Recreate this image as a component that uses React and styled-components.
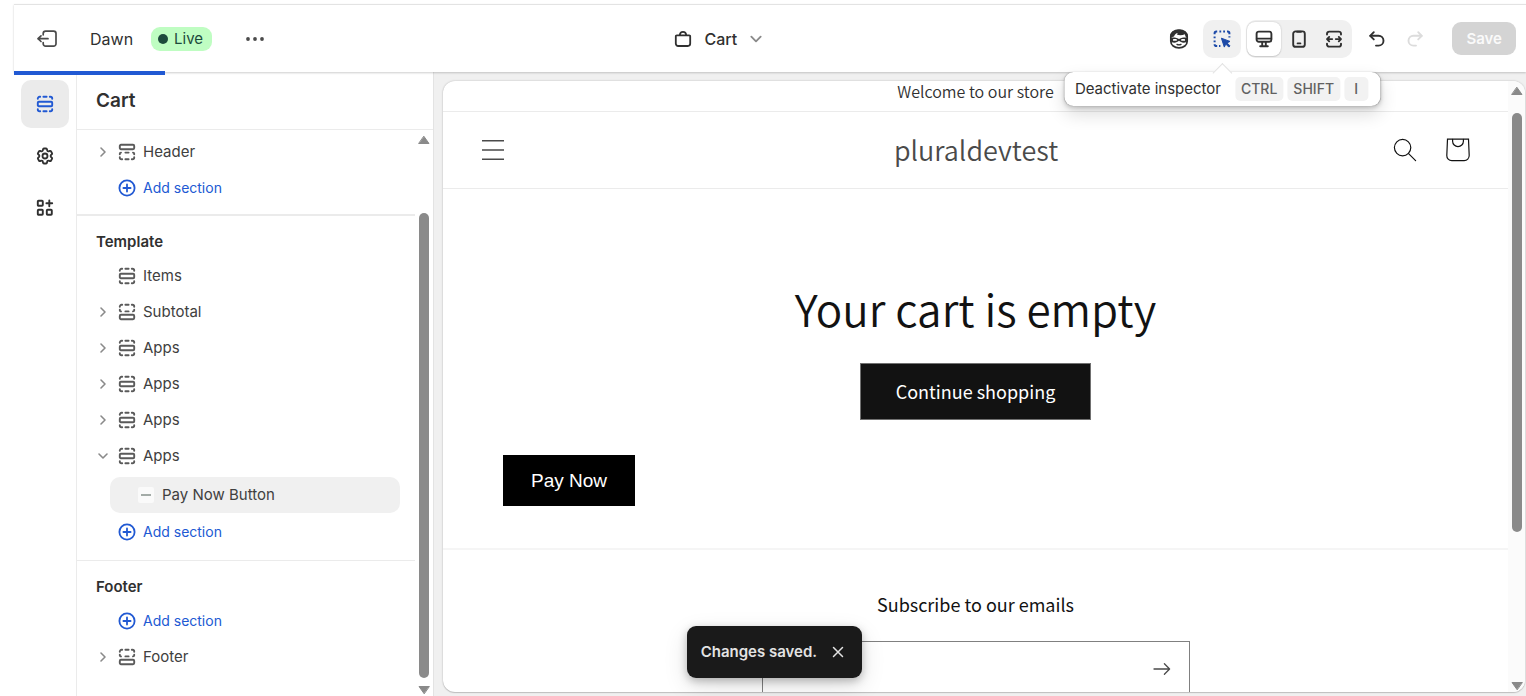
import React, { useState } from 'react'
import styled, { createGlobalStyle } from 'styled-components'
import { HiOutlineCog6Tooth } from 'react-icons/hi2'

const GlobalStyle = createGlobalStyle`
    * { box-sizing: border-box; }
    body {
        margin: 0;
        background: #fff;
        color: #303030;
        font-family: Inter, "Liberation Sans", sans-serif;
        font-size: 15px;
        line-height: 20px;
    }
    button, input { font: inherit; color: inherit; }
    button {
        border: 0;
        padding: 0;
        background: none;
        cursor: pointer;
    }
    h1, h2, h3, p, ul { margin: 0; padding: 0; }
    svg { display: block; flex: none; }
`

/* ---------- icons ---------- */

function Icon({ size = 18, box = 18, width = 1.6, children, ...rest }) {
    return (
        <svg
            width={size}
            height={size}
            viewBox={`0 0 ${box} ${box}`}
            fill='none'
            stroke='currentColor'
            strokeWidth={width}
            strokeLinecap='round'
            strokeLinejoin='round'
            aria-hidden='true'
            {...rest}
        >
            {children}
        </svg>
    )
}

const ExitIcon = () => (
    <Icon size={22} box={22} width={1.7}>
        <path d='M7.2 6.8V5.6a2.4 2.4 0 0 1 2.4-2.4h8a2.4 2.4 0 0 1 2.4 2.4v10.2a2.4 2.4 0 0 1-2.4 2.4h-8a2.4 2.4 0 0 1-2.4-2.4v-1.2' />
        <path d='M12 10.7H2M5 7.9l-3 2.8 3 2.8' />
    </Icon>
)

const DotsIcon = () => (
    <Icon size={20} box={20} fill='currentColor' stroke='none'>
        <circle cx='3' cy='10' r='1.9' />
        <circle cx='10' cy='10' r='1.9' />
        <circle cx='17' cy='10' r='1.9' />
    </Icon>
)

const BagIcon = () => (
    <Icon width={1.8}>
        <path d='M1.8 6.4a1 1 0 0 1 1-1h12.4a1 1 0 0 1 1 1v7.2a2.4 2.4 0 0 1-2.4 2.4H4.2a2.4 2.4 0 0 1-2.4-2.4z' />
        <path d='M5.8 5.2C6 3 7.2 1.9 9 1.9s3 1.1 3.2 3.3' />
    </Icon>
)

const Chevron = ({ down, size = 12 }) => (
    <Icon size={size} box={12} width={1.6}>
        {down ? <path d='M2 4l4 4 4-4' /> : <path d='M4 2l4 4-4 4' />}
    </Icon>
)

const SectionIcon = ({ kind = 'body' }) => (
    <Icon width={1.9}>
        {kind === 'body' && (
            <>
                <rect x='1.8' y='6.8' width='14.4' height='4.4' rx='1' />
                <path d='M1.8 3.8v-.2a1.8 1.8 0 0 1 1.8-1.8h.6M7.4 1.8h3.2M13.8 1.8h.6a1.8 1.8 0 0 1 1.8 1.8v.2' />
                <path d='M1.8 14.2v.2a1.8 1.8 0 0 0 1.8 1.8h.6M7.4 16.2h3.2M13.8 16.2h.6a1.8 1.8 0 0 0 1.8-1.8v-.2' />
            </>
        )}
        {kind === 'top' && (
            <>
                <rect x='1.8' y='1.8' width='14.4' height='4.4' rx='1.2' />
                <path d='M1.8 11.2v-.4a1.2 1.2 0 0 1 1.2-1.2M7.4 9.6h3.2M15 9.6a1.2 1.2 0 0 1 1.2 1.2v.4' />
                <path d='M1.8 14.2v.2a1.8 1.8 0 0 0 1.8 1.8h.6M7.4 16.2h3.2M13.8 16.2h.6a1.8 1.8 0 0 0 1.8-1.8v-.2' />
            </>
        )}
        {kind === 'bottom' && (
            <>
                <rect x='1.8' y='11.8' width='14.4' height='4.4' rx='1.2' />
                <path d='M1.8 3.8v-.2a1.8 1.8 0 0 1 1.8-1.8h.6M7.4 1.8h3.2M13.8 1.8h.6a1.8 1.8 0 0 1 1.8 1.8v.2' />
                <path d='M1.8 6.8v.4A1.2 1.2 0 0 0 3 8.4M7.4 8.4h3.2M15 8.4a1.2 1.2 0 0 0 1.2-1.2v-.4' />
            </>
        )}
    </Icon>
)

const PlusCircleIcon = () => (
    <Icon width={1.8}>
        <circle cx='9' cy='9' r='7.6' />
        <path d='M9 5.4v7.2M5.4 9h7.2' />
    </Icon>
)

const AppsAddIcon = () => (
    <Icon width={1.9}>
        <rect x='1.8' y='1.8' width='5' height='5' rx='.8' />
        <rect x='1.8' y='10.8' width='5' height='5' rx='.8' />
        <rect x='10.8' y='10.8' width='5' height='5' rx='.8' />
        <path d='M13.3 1.4v5.8M10.4 4.3h5.8' />
    </Icon>
)

const HeroIcon = () => (
    <Icon size={20} box={20} width={1.7}>
        <path d='M1.8 7.4C1.8 3.6 5 1.2 10 1.2s8.2 2.4 8.2 6.2v4.8c0 4-3.6 6.6-8.2 6.6s-8.2-2.6-8.2-6.6z' />
        <path
            d='M1.6 8.6V6.4C1.8 3 5 .8 10 .8c4.8 0 8.2 2.2 8.4 5.6v2.2l-1.8-.8-.8-2.6c-2.4 1.2-5.6 1.4-8 .2L8.8 4c-1.6.2-3 1.2-3.8 3.6z'
            fill='currentColor'
            stroke='none'
        />
        <path
            d='M1.8 8.8c2.4-.4 5-.2 8.2 1.2 3.2-1.4 5.8-1.6 8.2-1.2v3.6c-3 2-6 1.4-8.2-.6-2.2 2-5.2 2.6-8.2.6z'
            fill='currentColor'
            stroke='none'
        />
        <path d='M4.8 10.9H7M13 10.9h2.2' stroke='#fff' strokeWidth='1.8' />
        <path d='M8 15.4c1.2.6 2.8.6 4 0' strokeWidth='1.4' />
    </Icon>
)

const InspectIcon = () => (
    <Icon width={2} strokeLinecap='butt'>
        <path d='M1.6 4.2v-.8a1.8 1.8 0 0 1 1.8-1.8h.8M6.4 1.6h1.8M10.2 1.6H12M14 1.6h.6a1.8 1.8 0 0 1 1.8 1.8v.8' />
        <path d='M1.6 6.4v1.8M1.6 10.4v1.8M1.6 14.2A1.8 1.8 0 0 0 3.4 16h.8M6 16h1.4M16.4 6.2v1.4' />
        <path
            d='M8.4 8.2l8.6 3.2-3 1.5 3 3-1.2 1.2-3-3-1.5 3z'
            fill='currentColor'
            strokeWidth='1'
            strokeLinejoin='round'
        />
    </Icon>
)

const DesktopIcon = () => (
    <Icon width={1.9}>
        <rect x='1.6' y='1.6' width='14.8' height='10.2' rx='2.2' />
        <path d='M1.8 8.6h14.4M7.2 12v3.4M10.8 12v3.4M5.2 16.2h7.6' />
    </Icon>
)

const PhoneIcon = () => (
    <Icon width={1.9}>
        <rect x='3.2' y='1.4' width='11.6' height='15.4' rx='2.4' />
        <path d='M7.6 13.4h2.8M7 1.8h4' />
    </Icon>
)

const FullWidthIcon = () => (
    <Icon width={1.9}>
        <path d='M2 4.6v-.8a2.2 2.2 0 0 1 2.2-2.2h9.6A2.2 2.2 0 0 1 16 3.8v.8' />
        <path d='M2 13.6v.8a2.2 2.2 0 0 0 2.2 2.2h9.6a2.2 2.2 0 0 0 2.2-2.2v-.8' />
        <path d='M2 9.1h5.2M10.8 9.1H16M4.2 6.9 2 9.1l2.2 2.2M13.8 6.9 16 9.1l-2.2 2.2' />
    </Icon>
)

const UndoIcon = ({ flip }) => (
    <Icon width={1.9} transform={flip ? 'scale(-1 1)' : undefined}>
        <path d='M5.8 2.2 2.2 5.8l3.6 3.6' />
        <path d='M2.4 5.8h8.2a4.9 4.9 0 0 1 0 9.8H8' />
    </Icon>
)

const MenuIcon = () => (
    <Icon size={24} box={24} width={1.5} strokeLinecap='butt' stroke='#4a4a4a'>
        <path d='M1 2.7h22M1 12h22M1 21.3h22' />
    </Icon>
)

const SearchIcon = () => (
    <Icon size={24} box={24} width={1.2}>
        <circle cx='9.6' cy='9.6' r='8.2' />
        <path d='M15.6 15.6l7 7' />
    </Icon>
)

const CartIcon = () => (
    <Icon size={26} box={26} width={1.2} strokeLinejoin='miter'>
        <path d='M2.5 2.2h21l.7 16.2a5 5 0 0 1-5 5.2H6.8a5 5 0 0 1-5-5.2z' />
        <path d='M7.6 2.4v1.8a5.4 5.4 0 0 0 10.8 0V2.4' />
    </Icon>
)

const ArrowIcon = () => (
    <Icon width={1.3}>
        <path d='M1 9h15.4M11.4 3.8 16.6 9l-5.2 5.2' />
    </Icon>
)

const CloseIcon = () => (
    <Icon size={12} box={12} width={1.5}>
        <path d='M1.5 1.5l9 9M10.5 1.5l-9 9' />
    </Icon>
)

const Triangle = ({ up }) => (
    <Icon size={12} box={12} fill='currentColor' width={1}>
        {up ? <path d='M6 2.5 11 9.5H1z' /> : <path d='M6 9.5 1 2.5h10z' />}
    </Icon>
)

/* ---------- small parts ---------- */

function Scrollbar({ before, thumb, after }) {
    return (
        <Track aria-hidden='true'>
            <Triangle up />
            <Thumb $before={before} $size={thumb} $after={after} />
            <Triangle />
        </Track>
    )
}

function SectionRow({ name, kind, state }) {
    return (
        <Row>
            <Toggle aria-label={`Expand ${name}`} disabled={!state}>
                {state && <Chevron down={state === 'open'} />}
            </Toggle>
            <SectionIcon kind={kind} />
            <RowName href='#section'>{name}</RowName>
        </Row>
    )
}

function AddSection() {
    return (
        <Row>
            <AddButton>
                <PlusCircleIcon />
                Add section
            </AddButton>
        </Row>
    )
}

function TopBar() {
    return (
        <Header>
            <ThemeInfo>
                <IconButton aria-label='Exit'><ExitIcon /></IconButton>
                <ThemeName>Dawn</ThemeName>
                <Badge>Live</Badge>
                <IconButton aria-label='More actions'><DotsIcon /></IconButton>
            </ThemeInfo>

            <PagePicker>
                <BagIcon />
                Cart
                <Chevron down size={14} />
            </PagePicker>

            <Tools>
                <ToolButton aria-label='Sidekick'><HeroIcon /></ToolButton>
                <InspectorWrap>
                    <InspectorButton aria-label='Deactivate inspector'><InspectIcon /></InspectorButton>
                    <Tooltip role='tooltip'>
                        <span>Deactivate inspector</span>
                        <Keys>
                            <kbd>CTRL</kbd>
                            <kbd>SHIFT</kbd>
                            <kbd>I</kbd>
                        </Keys>
                    </Tooltip>
                </InspectorWrap>
                <Devices>
                    <DeviceButton $active aria-label='Desktop'><DesktopIcon /></DeviceButton>
                    <DeviceButton aria-label='Mobile'><PhoneIcon /></DeviceButton>
                    <DeviceButton aria-label='Fullscreen'><FullWidthIcon /></DeviceButton>
                </Devices>
                <History>
                    <ToolButton aria-label='Undo'><UndoIcon /></ToolButton>
                    <ToolButton aria-label='Redo' disabled><UndoIcon flip /></ToolButton>
                </History>
                <SaveButton disabled>Save</SaveButton>
            </Tools>
        </Header>
    )
}

function Sidebar() {
    return (
        <Panel>
            <PanelTitle>Cart</PanelTitle>
            <PanelBody>
                <Sections>
                    <Group $line={2}>
                        <SectionRow name='Header' kind='top' state='closed' />
                        <AddSection />
                    </Group>
                    <Group $line={1}>
                        <GroupTitle>Template</GroupTitle>
                        <SectionRow name='Items' />
                        <SectionRow name='Subtotal' kind='bottom' state='closed' />
                        <SectionRow name='Apps' state='closed' />
                        <SectionRow name='Apps' state='closed' />
                        <SectionRow name='Apps' state='closed' />
                        <SectionRow name='Apps' state='open' />
                        <BlockRow href='#block'>
                            <BlockThumb />
                            Pay Now Button
                        </BlockRow>
                        <AddSection />
                    </Group>
                    <Group>
                        <GroupTitle>Footer</GroupTitle>
                        <AddSection />
                        <SectionRow name='Footer' kind='bottom' state='closed' />
                    </Group>
                </Sections>
                <Scrollbar before={67} thumb={466} after={6} />
            </PanelBody>
        </Panel>
    )
}

function Store() {
    return (
        <Frame>
            <StorePage>
                <Announcement>Welcome to our store</Announcement>
                <StoreHeader>
                    <IconButton aria-label='Menu'><MenuIcon /></IconButton>
                    <StoreName href='#home'>pluraldevtest</StoreName>
                    <StoreLinks>
                        <IconButton aria-label='Search'><SearchIcon /></IconButton>
                        <IconButton aria-label='Cart'><CartIcon /></IconButton>
                    </StoreLinks>
                </StoreHeader>
                <CartSection>
                    <EmptyTitle>Your cart is empty</EmptyTitle>
                    <ShopButton href='#shop'>Continue shopping</ShopButton>
                    <PayButton>Pay Now</PayButton>
                </CartSection>
                <Newsletter>
                    <NewsletterTitle id='newsletter'>Subscribe to our emails</NewsletterTitle>
                    <EmailField>
                        <input type='email' aria-labelledby='newsletter' />
                        <IconButton aria-label='Subscribe'><ArrowIcon /></IconButton>
                    </EmailField>
                </Newsletter>
            </StorePage>
            <StoreScroll>
                <Scrollbar before={16} thumb={418} after={148} />
            </StoreScroll>
        </Frame>
    )
}

function App() {
    const [toast, setToast] = useState(true)

    return (
        <Page>
            <GlobalStyle />
            <TopBar />
            <Editor>
                <Rail>
                    <RailButton $active aria-label='Sections'><SectionIcon /></RailButton>
                    <RailButton aria-label='Theme settings'><HiOutlineCog6Tooth size={20} strokeWidth={2.2} /></RailButton>
                    <RailButton aria-label='App embeds'><AppsAddIcon /></RailButton>
                </Rail>
                <Sidebar />
                <Canvas>
                    <Store />
                </Canvas>
            </Editor>
            {toast && (
                <Toast role='status'>
                    Changes saved.
                    <IconButton aria-label='Dismiss' onClick={() => setToast(false)}><CloseIcon /></IconButton>
                </Toast>
            )}
        </Page>
    )
}

/* ---------- page and top bar ---------- */

const Page = styled.div`
    position: relative;
    display: flex;
    flex-direction: column;
    height: 100vh;
    padding: 4px 0 0 14px;
    overflow: hidden;
`

const Header = styled.header`
    position: relative;
    z-index: 2;
    display: flex;
    align-items: center;
    justify-content: space-between;
    flex: none;
    height: 68px;
    padding: 0 10px 0 22px;
    background: #fff;
    border-top: 1px solid #e3e3e3;
    box-shadow: 0 1px 2px rgba(0, 0, 0, 0.2);

    /* loading bar */
    &::after {
        content: '';
        position: absolute;
        left: 0;
        bottom: -3px;
        width: 10%;
        height: 4px;
        background: #2159d3;
    }
`

const IconButton = styled.button`
    display: flex;
    align-items: center;
    justify-content: center;
`

const ThemeInfo = styled.div`
    display: flex;
    align-items: center;
    color: #4a4a4a;
`

const ThemeName = styled.span`
    margin: 0 18px 0 32px;
    color: #303030;
    font-size: 16px;
`

const Badge = styled.span`
    display: flex;
    align-items: center;
    gap: 6px;
    height: 24px;
    margin-right: 33px;
    padding: 0 9px 0 7px;
    border-radius: 9px;
    background: #bffdc2;
    color: #1d4a3c;

    &::before {
        content: '';
        width: 10px;
        height: 10px;
        border-radius: 50%;
        background: currentColor;
    }
`

const PagePicker = styled.button`
    display: flex;
    align-items: center;
    gap: 12px;
    margin-left: 12px;
    font-size: 16px;
    font-weight: 500;

    svg:last-child { color: #8a8a8a; }
`

const Tools = styled.div`
    display: flex;
    align-items: center;
`

const ToolButton = styled.button`
    display: flex;
    align-items: center;
    justify-content: center;
    width: 38px;
    height: 38px;

    &:disabled { color: #dcdcdc; }
`

const InspectorWrap = styled.div`
    position: relative;
    margin: 0 5px;
`

const InspectorButton = styled(ToolButton)`
    border-radius: 10px;
    background: #f0f0f0;
    color: #1d4aa8;
`

const Tooltip = styled.div`
    position: absolute;
    top: 52px;
    left: 50%;
    display: flex;
    align-items: center;
    gap: 14px;
    height: 34px;
    padding: 0 12px 0 10px;
    border-radius: 9px;
    background: #fff;
    box-shadow: 0 0 1px rgba(0, 0, 0, 0.3), 0 2px 4px rgba(0, 0, 0, 0.18), 0 8px 18px rgba(0, 0, 0, 0.14);
    white-space: nowrap;
    transform: translateX(-50%);

    &::before {
        content: '';
        position: absolute;
        top: -6px;
        left: 50%;
        width: 13px;
        height: 13px;
        margin-left: -7px;
        border: 1px solid #e3e3e3;
        border-right: 0;
        border-bottom: 0;
        background: #fff;
        transform: rotate(45deg);
    }
`

const Keys = styled.span`
    display: flex;
    gap: 4px;

    kbd {
        min-width: 24px;
        padding: 2px 6px;
        border-radius: 5px;
        background: #f2f2f2;
        color: #616161;
        font-family: inherit;
        font-size: 14px;
        font-weight: 500;
        text-align: center;
    }
`

const Devices = styled.div`
    display: flex;
    align-items: center;
    gap: 1px;
    height: 38px;
    padding: 0 1px;
    border-radius: 10px;
    background: #f0f0f0;
`

const DeviceButton = styled.button`
    display: flex;
    align-items: center;
    justify-content: center;
    width: 34px;
    height: 34px;
    border-radius: 8px;
    background: ${p => (p.$active ? '#fff' : 'transparent')};
    box-shadow: ${p => (p.$active ? '0 0 2px rgba(0, 0, 0, 0.2), 0 1px 1px rgba(0, 0, 0, 0.1)' : 'none')};
`

const History = styled.div`
    display: flex;
    margin: 0 18px 0 6px;
`

const SaveButton = styled.button`
    height: 33px;
    padding: 0 14px;
    border-radius: 9px;
    background: #d4d4d4;
    font-weight: 600;

    &:disabled { color: #fafafa; }
`

/* ---------- left side ---------- */

const Editor = styled.div`
    display: flex;
    flex: 1;
    min-height: 0;
`

const Rail = styled.nav`
    display: flex;
    flex-direction: column;
    align-items: center;
    gap: 4px;
    flex: none;
    width: 63px;
    padding-top: 8px;
    border-right: 1px solid #ebebeb;
`

const RailButton = styled.button`
    display: flex;
    align-items: center;
    justify-content: center;
    width: 48px;
    height: 48px;
    border-radius: 10px;
    background: ${p => (p.$active ? '#ebebeb' : 'transparent')};
    color: ${p => (p.$active ? '#2159d3' : '#303030')};
`

const Panel = styled.aside`
    display: flex;
    flex-direction: column;
    flex: none;
    width: 357px;
    border-right: 1px solid #e3e3e3;
`

const PanelTitle = styled.h1`
    flex: none;
    padding: 18px 19px;
    border-bottom: 1px solid #ebebeb;
    font-size: 19px;
    font-weight: 600;
    line-height: 21px;
`

const PanelBody = styled.div`
    display: flex;
    flex: 1;
    min-height: 0;
    padding-right: 1px;
`

const Sections = styled.div`
    flex: 1;
    padding-top: 4px;
    overflow: hidden;
`

const Group = styled.section`
    padding-bottom: ${p => (p.$line === 2 ? 8 : 10)}px;
    border-bottom: ${p => p.$line || 0}px solid #ebebeb;
`

const GroupTitle = styled.h2`
    padding: 16px 19px 6px;
    font-size: 15px;
    font-weight: 600;
    line-height: 20px;
`

const Row = styled.div`
    display: flex;
    align-items: center;
    height: 36px;
    padding-left: 20px;
    color: #5a5a5a;
`

const Toggle = styled.button`
    display: flex;
    align-items: center;
    width: 12px;
    height: 20px;
    margin-right: 9px;
    color: #8a8a8a;
`

const RowName = styled.a`
    margin-left: 7px;
    color: #404040;
    text-decoration: none;
`

const AddButton = styled.button`
    display: flex;
    align-items: center;
    gap: 7px;
    margin-left: 21px;
    color: #2159d3;
    font-size: 14px;
`

const BlockRow = styled.a`
    display: flex;
    align-items: center;
    gap: 8px;
    height: 36px;
    margin: 3px 15px 1px 33px;
    padding-left: 28px;
    border-radius: 10px;
    background: #f0f0f0;
    color: #404040;
    text-decoration: none;
`

const BlockThumb = styled.span`
    display: flex;
    align-items: center;
    justify-content: center;
    width: 16px;
    height: 16px;
    border-radius: 2px;
    background: #fafafa;

    &::before {
        content: '';
        width: 10px;
        height: 2px;
        background: #a3aba7;
    }
`

/* ---------- scrollbars ---------- */

const Track = styled.div`
    display: flex;
    flex-direction: column;
    align-items: center;
    width: 17px;
    height: 100%;
    padding-top: 4px;
    color: #8a8a8a;
`

const Thumb = styled.div`
    flex: ${p => p.$size} 1 0;
    width: 10px;
    margin: ${p => p.$before}px 0 ${p => p.$after}px;
    border-radius: 5px;
    background: #8a8a8a;
`

/* ---------- store preview ---------- */

const Canvas = styled.main`
    flex: 1;
    min-width: 0;
    padding: 9px 1px 4px 9px;
    background: #f0f0f0;
`

const Frame = styled.div`
    display: flex;
    height: 100%;
    border-radius: 12px;
    background: #fff;
    box-shadow: 0 0 2px rgba(0, 0, 0, 0.25), 0 1px 1px rgba(0, 0, 0, 0.15);
    overflow: hidden;
`

const StorePage = styled.div`
    flex: 1;
    color: #121212;
    font-family: "Noto Sans CJK SC", "Noto Sans", sans-serif;
    overflow: hidden;
`

const StoreScroll = styled.div`
    flex: none;
    background: #fbfbfb;
`

const Announcement = styled.p`
    height: 31px;
    border-bottom: 1px solid #ebebeb;
    color: #303030;
    font-size: 16px;
    font-weight: 350;
    line-height: 20px;
    text-align: center;
`

const StoreHeader = styled.header`
    display: grid;
    grid-template-columns: 1fr auto 1fr;
    align-items: center;
    height: 77px;
    padding: 0 37px 0 38px;
    border-bottom: 1px solid #ebebeb;

    & > button { justify-self: start; }
`

const StoreName = styled.a`
    color: #4a4a4a;
    font-size: 27px;
    font-weight: 350;
    line-height: 36px;
    text-decoration: none;
`

const StoreLinks = styled.div`
    display: flex;
    align-items: center;
    justify-content: flex-end;
    gap: 28px;
`

const CartSection = styled.section`
    display: flex;
    flex-direction: column;
    align-items: center;
    padding: 89px 60px 42px;
    border-bottom: 2px solid #f5f5f5;
`

const EmptyTitle = styled.h2`
    font-size: 44px;
    font-weight: 350;
    line-height: 60px;
`

const ShopButton = styled.a`
    margin: 25px 0 35px;
    padding: 16px 35px;
    border: 1px solid #707070;
    background: #121212;
    color: #fff;
    font-size: 18px;
    line-height: 23px;
    text-decoration: none;
`

const PayButton = styled.button`
    align-self: flex-start;
    padding: 14px 28px;
    background: #000;
    color: #fff;
    font-family: "Liberation Sans", Arial, sans-serif;
    font-size: 19px;
    line-height: 23px;
`

const Newsletter = styled.section`
    display: flex;
    flex-direction: column;
    align-items: center;
    padding-top: 41px;
`

const NewsletterTitle = styled.h3`
    font-size: 18px;
    font-weight: 400;
    line-height: 26px;
`

const EmailField = styled.div`
    display: flex;
    width: 100%;
    max-width: 428px;
    height: 56px;
    margin-top: 24px;
    padding-right: 18px;
    border: 1px solid #808080;
    color: #4a4a4a;

    input {
        flex: 1;
        border: 0;
        outline: 0;
        background: none;
    }
`

const Toast = styled.div`
    position: absolute;
    z-index: 3;
    bottom: 18px;
    left: 45%;
    display: flex;
    align-items: center;
    gap: 15px;
    height: 52px;
    padding: 0 18px 0 14px;
    border-radius: 9px;
    background: #1a1a1a;
    box-shadow: 0 3px 8px rgba(0, 0, 0, 0.25), 0 8px 24px rgba(0, 0, 0, 0.12);
    color: #e3e3e3;
    font-weight: 600;
`

export default App
